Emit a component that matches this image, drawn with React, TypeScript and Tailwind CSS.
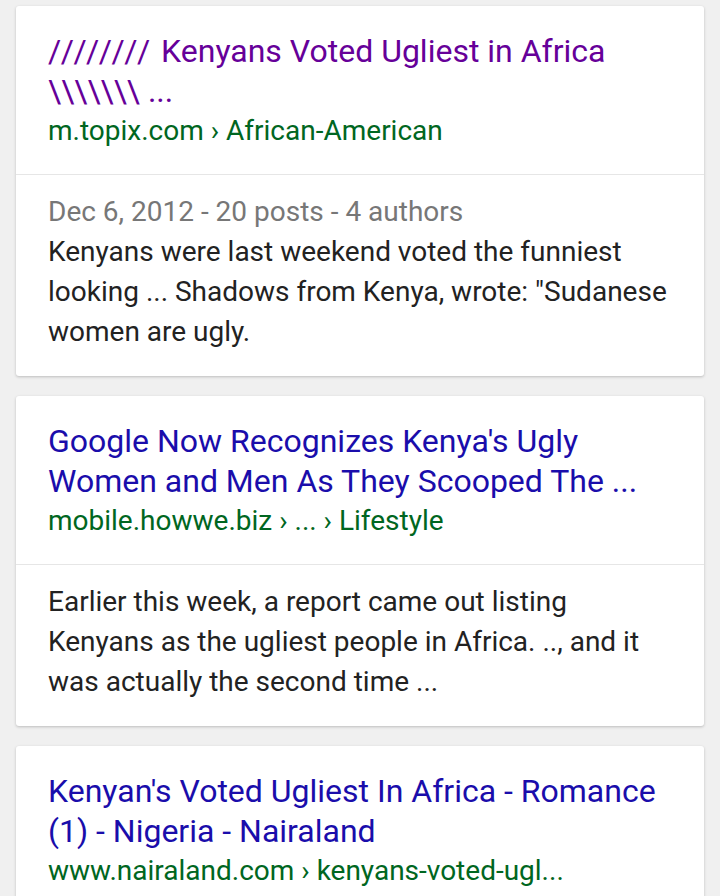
import React from 'react';

interface Result {
  title: React.ReactNode[];
  visited?: boolean;
  url: string;
  meta?: string;
  snippet: string[];
}

const results: Result[] = [
  {
    title: [
      <>
        <span className="tracking-[3px]">////////</span> Kenyans Voted Ugliest in Africa
      </>,
      '\\\\\\\\\\\\\\ ...',
    ],
    visited: true,
    url: 'm.topix.com › African-American',
    meta: 'Dec 6, 2012 - 20 posts - 4 authors',
    snippet: [
      'Kenyans were last weekend voted the funniest',
      'looking ... Shadows from Kenya, wrote: "Sudanese',
      'women are ugly.',
    ],
  },
  {
    title: ["Google Now Recognizes Kenya's Ugly", 'Women and Men As They Scooped The ...'],
    url: 'mobile.howwe.biz › ... › Lifestyle',
    snippet: [
      'Earlier this week, a report came out listing',
      'Kenyans as the ugliest people in Africa. .., and it',
      'was actually the second time ...',
    ],
  },
  {
    title: ["Kenyan's Voted Ugliest In Africa - Romance", '(1) - Nigeria - Nairaland'],
    url: 'www.nairaland.com › kenyans-voted-ugl...',
    snippet: [],
  },
];

const ResultCard: React.FC<{ result: Result }> = ({ result }) => (
  <div className="bg-white rounded-[3px] shadow-[0_1px_3px_rgba(0,0,0,0.22)]">
    <div className="px-8 pt-[25px] pb-[23px] border-b border-[#e6e6e6]">
      <div
        className={`text-[32px] leading-[40px] ${
          result.visited ? 'text-[#660099]' : 'text-[#1a0dab]'
        }`}
      >
        {result.title.map((line, i) => (
          <div key={i} className="whitespace-nowrap">
            {line}
          </div>
        ))}
      </div>
      <div className="text-[28px] leading-[40px] text-[#006621] whitespace-nowrap">
        {result.url}
      </div>
    </div>
    {result.snippet.length > 0 && (
      <div className="px-8 pt-[17px] pb-[24px] text-[28px] leading-[40px] text-[#222]">
        {result.meta && <div className="text-[#777]">{result.meta}</div>}
        {result.snippet.map((line, i) => (
          <div key={i} className="whitespace-nowrap">
            {line}
          </div>
        ))}
      </div>
    )}
  </div>
);

export default function App() {
  return (
    <div
      className="min-h-[896px] bg-[#f0f0f0] px-4 pt-[6px] pb-6 flex flex-col gap-5"
      style={{ fontFamily: 'Roboto, "Noto Sans", sans-serif' }}
    >
      {results.map((r, i) => (
        <ResultCard key={i} result={r} />
      ))}
    </div>
  );
}
